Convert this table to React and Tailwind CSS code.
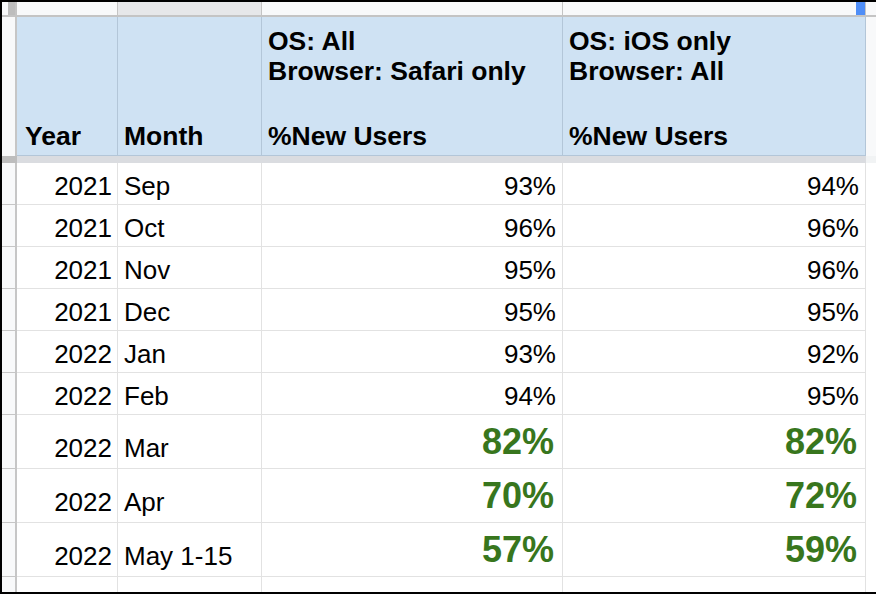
import React from 'react';

const rows = [
  { year: '2021', month: 'Sep', c: '93%', d: '94%' },
  { year: '2021', month: 'Oct', c: '96%', d: '96%' },
  { year: '2021', month: 'Nov', c: '95%', d: '96%' },
  { year: '2021', month: 'Dec', c: '95%', d: '95%' },
  { year: '2022', month: 'Jan', c: '93%', d: '92%' },
  { year: '2022', month: 'Feb', c: '94%', d: '95%' },
  { year: '2022', month: 'Mar', c: '82%', d: '82%', hi: true },
  { year: '2022', month: 'Apr', c: '70%', d: '72%', hi: true },
  { year: '2022', month: 'May 1-15', c: '57%', d: '59%', hi: true },
];

// left row-number strip (cropped)
const Gutter = () => (
  <div className="w-[15px] shrink-0 bg-[#f8f9fa] border-r-2 border-b border-[#c6c6c6]" />
);

const DataRow = ({ r }) => {
  const rowH = r.hi ? 'h-[54px]' : 'h-[42px]';
  const textPb = r.hi ? 'pb-[4px]' : 'pb-[2px]';
  const val = r.hi
    ? 'pb-[8px] pr-[8px] text-[36px] leading-none font-bold text-[#38761d]'
    : 'pb-[2px] pr-[6px] text-[26px] leading-[32px]';

  return (
    <div className={`flex ${rowH}`}>
      <Gutter />
      <div className={`w-[101px] shrink-0 flex items-end justify-end pr-[5px] ${textPb} border-r border-b border-[#e2e2e2] text-[26px] leading-[32px]`}>
        {r.year}
      </div>
      <div className={`w-[144px] shrink-0 flex items-end pl-[6px] ${textPb} border-r border-b border-[#e2e2e2] text-[26px] leading-[32px]`}>
        {r.month}
      </div>
      <div className={`w-[301px] shrink-0 flex items-end justify-end ${val} border-r border-b border-[#e2e2e2]`}>
        {r.c}
      </div>
      <div className={`w-[303px] shrink-0 flex items-end justify-end ${val} border-r border-b border-[#e2e2e2]`}>
        {r.d}
      </div>
      <div className="flex-1 bg-white" />
    </div>
  );
};

const HeadLines = ({ os, browser }) => (
  <>
    <div className="leading-[30px]">{os}</div>
    <div className="leading-[30px]">{browser}</div>
    <div className="h-[34px]" />
    <div>%New Users</div>
  </>
);

export default function App() {
  return (
    <div className="w-[876px] h-[594px] overflow-hidden bg-white border-t-2 border-l-2 border-b-2 border-black text-black font-['Liberation_Sans',Arial,sans-serif]">
      {/* column letter strip (cropped) */}
      <div className="flex h-[15px] border-b-2 border-[#c4c4c4]">
        <div className="w-[15px] shrink-0 flex border-r-2 border-[#c4c4c4]">
          <div className="w-[6px] bg-[#f8f9fa]" />
          <div className="flex-1 bg-[#bdbdbd]" />
        </div>
        <div className="w-[101px] shrink-0 bg-[#f8f9fa] border-r border-[#c4c4c4]" />
        <div className="w-[144px] shrink-0 bg-[#e6e7e9] border-r border-[#c4c4c4]" />
        <div className="w-[301px] shrink-0 bg-[#f8f9fa] border-r border-[#c4c4c4]" />
        <div className="w-[303px] shrink-0 flex justify-end bg-[#f8f9fa] border-r border-[#c4c4c4]">
          <div className="w-[9px] bg-[#4f8ef7]" />
        </div>
        <div className="flex-1 bg-[#f8f9fa]" />
      </div>

      {/* header row */}
      <div className="flex h-[139px] font-bold text-[26.5px] leading-[32px]">
        <div className="w-[15px] shrink-0 bg-[#f8f9fa] border-r-2 border-[#c6c6c6]" />
        <div className="w-[101px] shrink-0 flex items-end pl-[8px] pb-[3px] bg-[#cfe2f3] border-r border-b border-[#b3c6d8]">
          Year
        </div>
        <div className="w-[144px] shrink-0 flex items-end pl-[6px] pb-[3px] bg-[#cfe2f3] border-r border-b border-[#b3c6d8]">
          Month
        </div>
        <div className="w-[301px] shrink-0 flex flex-col justify-end pl-[6px] pb-[3px] bg-[#cfe2f3] border-r border-b border-[#b3c6d8]">
          <HeadLines os="OS: All" browser="Browser: Safari only" />
        </div>
        <div className="w-[303px] shrink-0 flex flex-col justify-end pl-[6px] pb-[3px] bg-[#cfe2f3] border-r border-b border-[#b3c6d8]">
          <HeadLines os="OS: iOS only" browser="Browser: All" />
        </div>
        <div className="flex-1 bg-[#f8f9fa]" />
      </div>

      {/* frozen row bar */}
      <div className="flex h-[7px]">
        <div className="w-[15px] shrink-0 bg-[#bdbdbd]" />
        <div className="w-[849px] shrink-0 bg-[#dadce0]" />
        <div className="flex-1 bg-[#f1f3f4]" />
      </div>

      {rows.map((r) => (
        <DataRow key={r.year + r.month} r={r} />
      ))}

      {/* next (empty) row, cropped */}
      <div className="flex h-[15px]">
        <div className="w-[15px] shrink-0 bg-[#f8f9fa] border-r-2 border-[#c6c6c6]" />
        <div className="w-[101px] shrink-0 border-r border-[#e2e2e2]" />
        <div className="w-[144px] shrink-0 border-r border-[#e2e2e2]" />
        <div className="w-[301px] shrink-0 border-r border-[#e2e2e2]" />
        <div className="w-[303px] shrink-0 border-r border-[#e2e2e2]" />
        <div className="flex-1 bg-white" />
      </div>
    </div>
  );
}
